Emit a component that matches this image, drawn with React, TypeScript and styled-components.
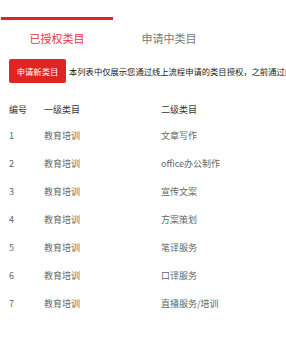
import React from "react";
import styled, { createGlobalStyle } from "styled-components";

const Global = createGlobalStyle`
  html, body { margin: 0; padding: 0; background: #fff; }
  body { font-family: "Noto Sans CJK SC", "Noto Sans", sans-serif; overflow: hidden; }
`;

const Page = styled.div`
  width: 286px;
  height: 337px;
  overflow: hidden;
  padding-top: 17px;
  box-sizing: border-box;
`;

const Tabs = styled.div`
  display: flex;
  padding-left: 1px;
`;

const Tab = styled.div<{ $active?: boolean }>`
  width: 112px;
  box-sizing: border-box;
  border-top: 3px solid ${(p) => (p.$active ? "#e02424" : "transparent")};
  color: ${(p) => (p.$active ? "#e8333a" : "#777")};
  font-size: 11px;
  line-height: 15px;
  padding-top: 11px;
  text-align: center;
`;

const Toolbar = styled.div`
  display: flex;
  align-items: center;
  gap: 3px;
  margin-top: 13px;
  padding-left: 9px;
  white-space: nowrap;
  overflow: hidden;
`;

const Button = styled.button`
  flex: none;
  width: 57px;
  height: 24px;
  border: none;
  border-radius: 2px;
  background: #e02424;
  color: #fff;
  font-family: inherit;
  font-size: 8.3px;
  padding: 0;
`;

const Note = styled.span`
  font-size: 8.3px;
  color: #222;
  overflow: hidden;
  text-overflow: clip;
`;

const Table = styled.div`
  margin-top: 18px;
  padding-left: 9px;
`;

const Row = styled.div<{ $head?: boolean }>`
  display: grid;
  grid-template-columns: 35px 117px 1fr;
  height: 28px;
  align-items: center;
  font-size: 9px;
  color: ${(p) => (p.$head ? "#333" : "#666")};
  &:first-child { height: 17px; margin-bottom: 3px; }
`;

const rows = [
  ["1", "教育培训", "文章写作"],
  ["2", "教育培训", "office办公制作"],
  ["3", "教育培训", "宣传文案"],
  ["4", "教育培训", "方案策划"],
  ["5", "教育培训", "笔译服务"],
  ["6", "教育培训", "口译服务"],
  ["7", "教育培训", "直播服务/培训"],
];

export default function App() {
  return (
    <Page>
      <Global />
      <Tabs>
        <Tab $active>已授权类目</Tab>
        <Tab>申请中类目</Tab>
      </Tabs>
      <Toolbar>
        <Button>申请新类目</Button>
        <Note>本列表中仅展示您通过线上流程申请的类目授权，之前通过线下流程申请的类目不在此展示</Note>
      </Toolbar>
      <Table>
        <Row $head>
          <span>编号</span>
          <span>一级类目</span>
          <span>二级类目</span>
        </Row>
        {rows.map((r) => (
          <Row key={r[0]}>
            <span>{r[0]}</span>
            <span>{r[1]}</span>
            <span>{r[2]}</span>
          </Row>
        ))}
      </Table>
    </Page>
  );
}
